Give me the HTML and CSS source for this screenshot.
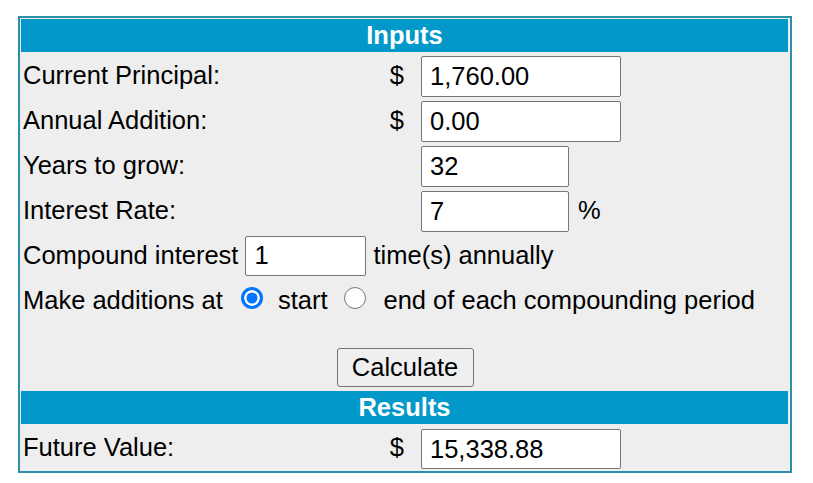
FILE: index.html
```html
<!DOCTYPE html>
<html lang="en">
<head>
    <meta charset="UTF-8">
    <title>Compound Interest Calculator</title>
    <link rel="stylesheet" href="styles.css">
</head>
<body>
    <form class="calc">
        <div class="bar">Inputs</div>

        <div class="row">
            <span class="label">Current Principal:</span>
            <span class="cur">$</span>
            <input class="field" type="text" value="1,760.00">
        </div>
        <div class="row">
            <span class="label">Annual Addition:</span>
            <span class="cur">$</span>
            <input class="field" type="text" value="0.00">
        </div>
        <div class="row">
            <span class="label">Years to grow:</span>
            <span class="cur"></span>
            <input class="field short" type="text" value="32">
        </div>
        <div class="row">
            <span class="label">Interest Rate:</span>
            <span class="cur"></span>
            <input class="field short" type="text" value="7">
            <span class="pct">%</span>
        </div>
        <div class="row">
            <span>Compound interest</span>
            <input class="field times" type="text" value="1">
            <span>time(s) annually</span>
        </div>
        <div class="row">
            <span>Make additions at</span>
            <input class="radio first" type="radio" name="when" checked>
            <span class="opt">start</span>
            <input class="radio" type="radio" name="when">
            <span class="opt">end of each compounding period</span>
        </div>

        <div class="actions">
            <button type="button" class="btn">Calculate</button>
        </div>

        <div class="bar">Results</div>
        <div class="row result">
            <span class="label">Future Value:</span>
            <span class="cur">$</span>
            <input class="field" type="text" value="15,338.88" readonly>
        </div>
    </form>
</body>
</html>
```

FILE: styles.css
```css
body {
    margin: 0;
    background: #fff;
    font-family: "Liberation Sans", Arial, sans-serif;
    font-size: 25.5px;
    color: #000;
}

.calc {
    box-sizing: border-box;
    width: 774px;
    margin: 16px 0 0 18px;
    padding: 1px 2px 1px 1px;
    border: 2px solid #2b8fa9;
    background: #eee;
}

.bar {
    height: 33px;
    line-height: 33px;
    background-color: #0398ca;
    color: #fff;
    font-weight: bold;
    text-align: center;
}

.bar + .row {
    margin-top: 1px;
}

.row {
    display: flex;
    align-items: center;
    height: 45px;
    padding-left: 2px;
    white-space: nowrap;
}

    .row > * {
        flex-shrink: 0;
    }

.label {
    width: 362px;
}

.cur {
    width: 19px;
    text-align: right;
}

.field {
    box-sizing: border-box;
    width: 200px;
    height: 41px;
    margin: 2px 0 0 17px;
    padding: 0 8px;
    border: 1px solid #767676;
    border-radius: 2px;
    background: #fff;
    font-family: inherit;
    font-size: 25.5px;
    color: #000;
}

    .field.short {
        width: 148px;
    }

    .field.times {
        width: 121px;
        height: 40px;
        margin: 0 7px 0 7px;
    }

.pct {
    margin-left: 9px;
}

.radio {
    appearance: none;
    box-sizing: border-box;
    width: 22px;
    height: 22px;
    min-width: 22px;
    margin: 0 0 5px 17px;
    border: 1px solid #767676;
    border-radius: 50%;
    background: #fff;
}

    .radio.first {
        margin-left: 18px;
    }

    .radio:checked {
        border: 3px solid #0075ff;
        background: #0075ff;
        box-shadow: inset 0 0 0 2.5px #fff;
    }

.opt {
    margin-left: 15px;
}

    .radio + .opt + .radio + .opt {
        margin-left: 17px;
    }

.actions {
    display: flex;
    justify-content: center;
    align-items: flex-end;
    height: 64px;
    padding-bottom: 4px;
    padding-left: 1px;
}

.btn {
    box-sizing: border-box;
    width: 137px;
    height: 39px;
    padding: 0;
    border: 1px solid #767676;
    border-radius: 3px;
    background-color: #efefef;
    font-family: inherit;
    font-size: 25.5px;
    color: #000;
}

.result .field {
    height: 40px;
    margin-top: 3px;
}
```
